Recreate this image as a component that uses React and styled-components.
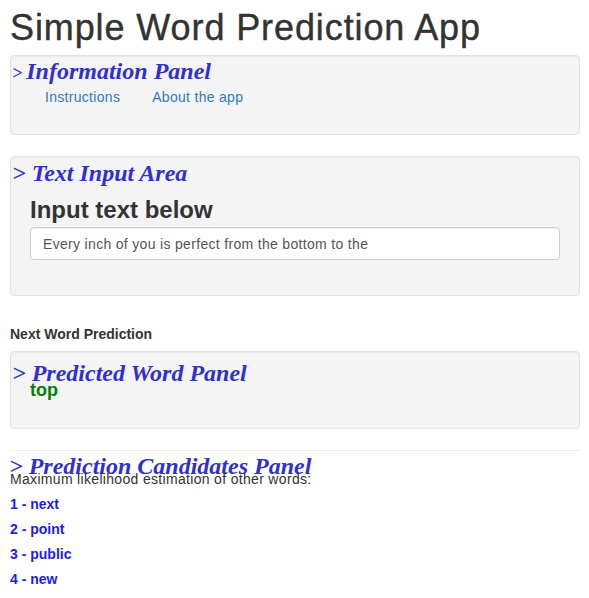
import React from "react";
import styled, { createGlobalStyle } from "styled-components";

const candidates = ["next", "point", "public", "new"];

export default function App() {
  return (
    <Page>
      <GlobalStyle />
      <Title>Simple Word Prediction App</Title>

      <Well $pad="3px 19px 27px">
        <PanelHeader>
          <Arrow $small>&gt;</Arrow> Information Panel
        </PanelHeader>
        <Tabs>
          <Tab href="#">Instructions</Tab>
          <Tab href="#">About the app</Tab>
        </Tabs>
      </Well>

      <Well $pad="4px 19px 35px" $top={21}>
        <PanelHeader>
          <Arrow>&gt;</Arrow> Text Input Area
        </PanelHeader>
        <InputLabel>Input text below</InputLabel>
        <TextBox defaultValue="Every inch of you is perfect from the bottom to the" />
      </Well>

      <Label>Next Word Prediction</Label>

      <Well $pad="11px 19px 29px" $top={7}>
        <PanelHeader $lh={20}>
          <Arrow>&gt;</Arrow> Predicted Word Panel
        </PanelHeader>
        <Predicted>top</Predicted>
      </Well>

      <Rule />

      <CandidatesHeader>
        <Arrow>&gt;</Arrow> Prediction Candidates Panel
      </CandidatesHeader>
      <Note>Maximum likelihood estimation of other words:</Note>
      <CandidateList>
        {candidates.map((word, i) => (
          <Candidate key={word}>
            {i + 1} - {word}
          </Candidate>
        ))}
      </CandidateList>
    </Page>
  );
}

const GlobalStyle = createGlobalStyle`
  body {
    margin: 0;
    background: #fff;
    font-family: "Liberation Sans", Arial, sans-serif;
    font-size: 14px;
    color: #333;
  }
`;

const Page = styled.div`
  display: flex;
  flex-direction: column;
  padding: 8px 9px 0 10px;
`;

const Title = styled.h1`
  margin: 0 0 7px;
  font-size: 36px;
  line-height: 40px;
  font-weight: 500;
  letter-spacing: 0.9px;
  -webkit-text-stroke: 0.4px #333;
  color: #333;
`;

const Well = styled.div`
  margin-top: ${(p) => p.$top || 0}px;
  padding: ${(p) => p.$pad};
  background: #f4f4f4;
  border: 1px solid #e3e3e3;
  border-radius: 4px;
  box-shadow: inset 0 1px 1px rgba(0, 0, 0, 0.05);
`;

const PanelHeader = styled.div`
  margin-left: -18px;
  font-family: "Liberation Serif", "Times New Roman", serif;
  font-style: italic;
  font-weight: bold;
  font-size: 24px;
  line-height: ${(p) => p.$lh || 24}px;
  color: #3030d0;
  white-space: nowrap;
`;

const Arrow = styled.span`
  font-size: ${(p) => (p.$small ? 18 : 24)}px;
  margin-right: ${(p) => (p.$small ? -2 : 0)}px;
`;

const Tabs = styled.nav`
  display: flex;
  gap: 2px;
  margin-top: 2px;
`;

const Tab = styled.a`
  padding: 0 15px;
  line-height: 20px;
  font-size: 14px;
  letter-spacing: 0.3px;
  color: #337ab7;
  text-decoration: none;
`;

const InputLabel = styled.h4`
  margin: 12px 0 4px;
  font-size: 24px;
  line-height: 26px;
  font-weight: bold;
  color: #333;
`;

const TextBox = styled.input`
  box-sizing: border-box;
  width: 100%;
  height: 33px;
  padding: 6px 12px;
  font-family: "Liberation Sans", Arial, sans-serif;
  font-size: 14px;
  letter-spacing: 0.32px;
  color: #555;
  background: #fff;
  border: 1px solid #ccc;
  border-radius: 4px;
  box-shadow: inset 0 1px 1px rgba(0, 0, 0, 0.075);
  outline: none;
`;

const Label = styled.div`
  margin-top: 28px;
  font-weight: bold;
  font-size: 14px;
  line-height: 20px;
  color: #333;
`;

const Predicted = styled.div`
  margin-top: -2px;
  font-weight: bold;
  font-size: 18px;
  line-height: 18px;
  color: #008000;
`;

const Rule = styled.hr`
  margin: 21px 0 0;
  border: 0;
  border-top: 1px solid #eee;
`;

const CandidatesHeader = styled(PanelHeader)`
  margin: 10px 0 0 -1px;
  line-height: 10px;
`;

const Note = styled.div`
  font-size: 14px;
  line-height: 17px;
  letter-spacing: 0.32px;
  color: #333;
`;

const CandidateList = styled.div`
  display: flex;
  flex-direction: column;
  margin-top: 4px;
`;

const Candidate = styled.div`
  font-weight: bold;
  font-size: 14px;
  line-height: 25px;
  color: #1c1cf0;
`;
